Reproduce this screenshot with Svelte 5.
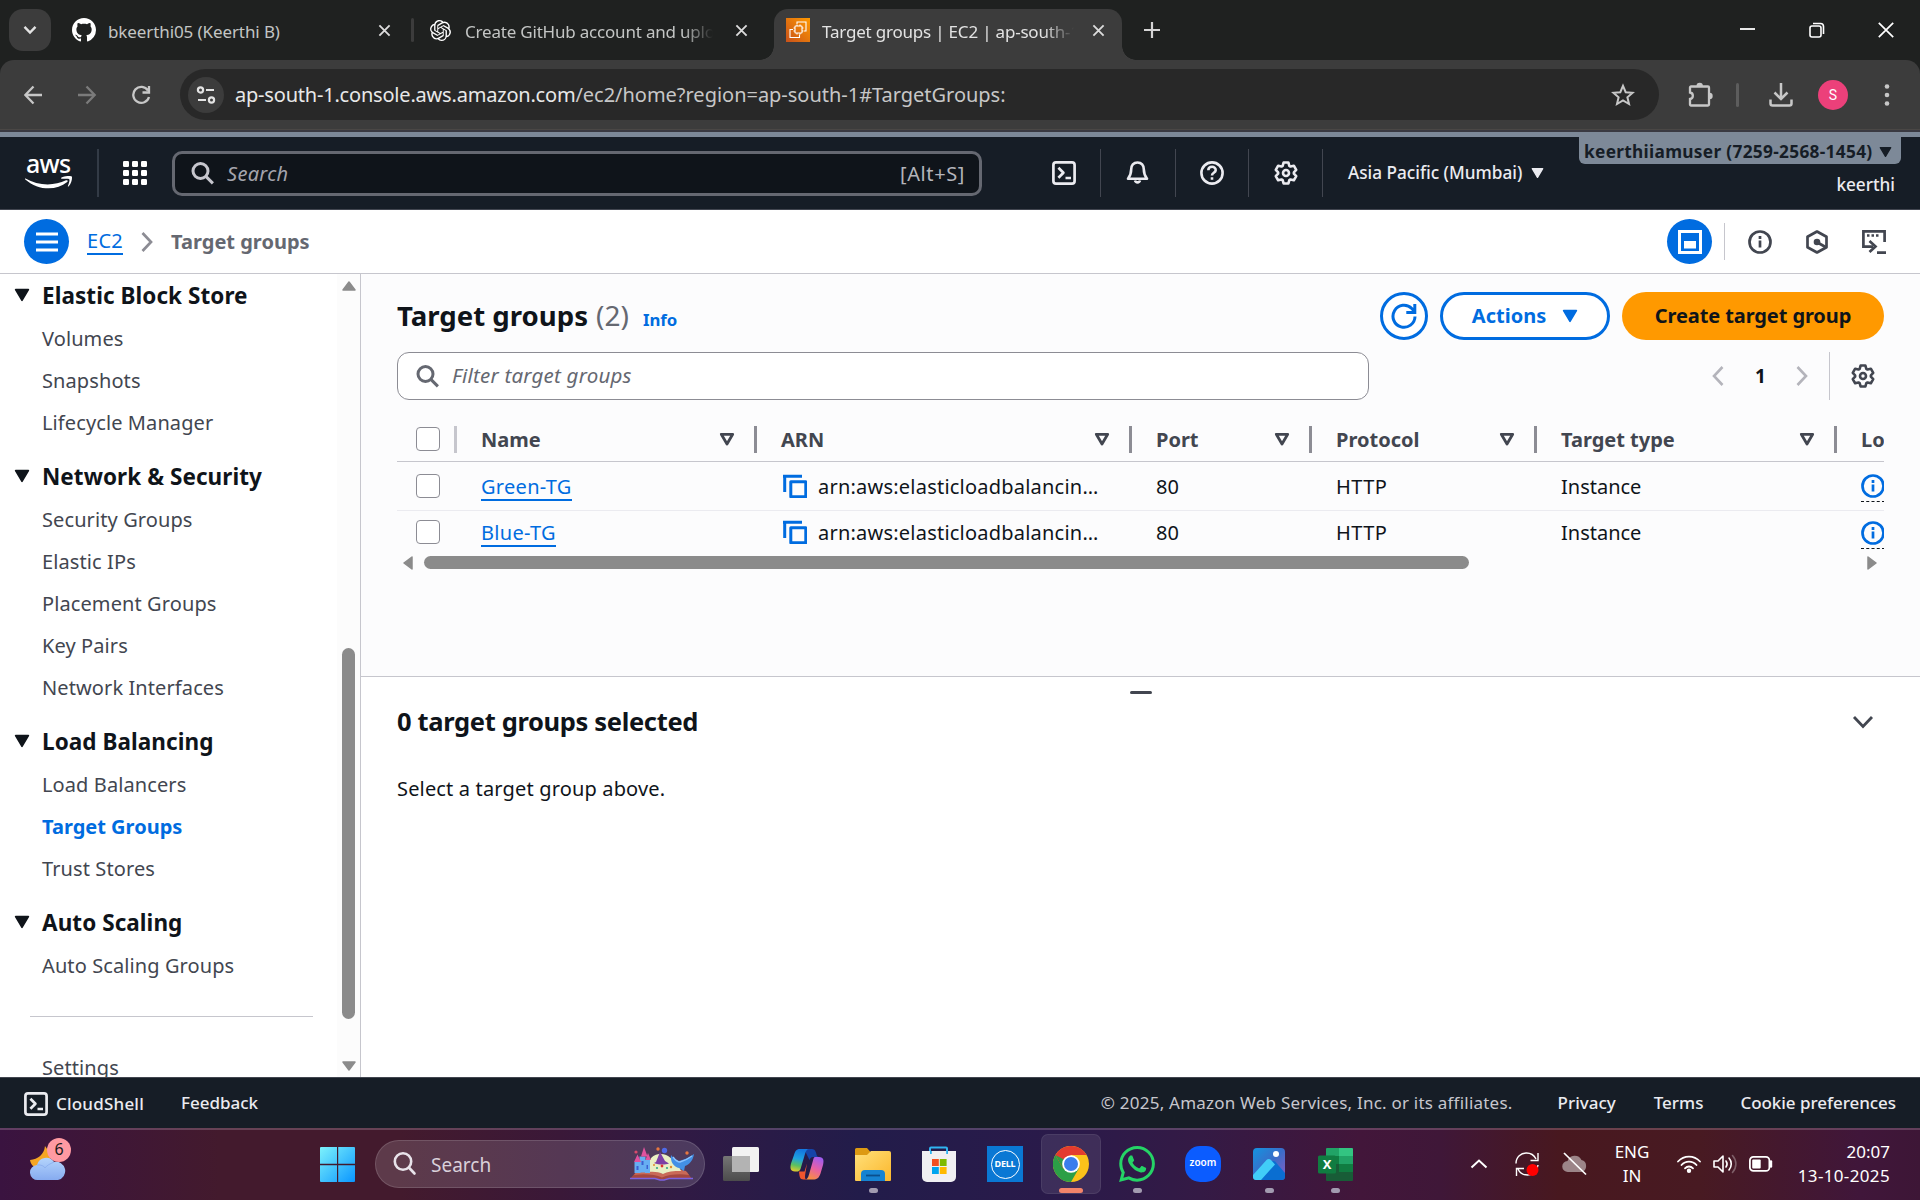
<script>
  const nav = [
    { title: 'Elastic Block Store', items: ['Volumes', 'Snapshots', 'Lifecycle Manager'] },
    { title: 'Network & Security', items: ['Security Groups', 'Elastic IPs', 'Placement Groups', 'Key Pairs', 'Network Interfaces'] },
    { title: 'Load Balancing', items: ['Load Balancers', 'Target Groups', 'Trust Stores'] },
    { title: 'Auto Scaling', items: ['Auto Scaling Groups'] }
  ];
  const current = 'Target Groups';
  const columns = ['Name', 'ARN', 'Port', 'Protocol', 'Target type'];
  const rows = [
    { name: 'Green-TG', arn: 'arn:aws:elasticloadbalancin…', port: '80', protocol: 'HTTP', type: 'Instance' },
    { name: 'Blue-TG', arn: 'arn:aws:elasticloadbalancin…', port: '80', protocol: 'HTTP', type: 'Instance' }
  ];

  // Outline of a six-toothed cog centred in a 24px box.
  function cog() {
    const pts = [];
    for (let k = 0; k < 6; k++) {
      const a = -90 + 60 * k;
      for (const [d, r] of [[-25, 7.9], [-13, 10.7], [13, 10.7], [25, 7.9]]) {
        const t = ((a + d) * Math.PI) / 180;
        pts.push(`${(12 + r * Math.cos(t)).toFixed(2)} ${(12 + r * Math.sin(t)).toFixed(2)}`);
      }
    }
    return `M${pts.join('L')}Z`;
  }
  const cogPath = cog();
</script>

{#snippet gear()}
  <svg class="i24" viewBox="0 0 24 24" fill="none" stroke="currentColor" stroke-width="2.6" stroke-linejoin="round"><path d={cogPath} /><circle cx="12" cy="12" r="3" /></svg>
{/snippet}
{#snippet shell()}
  <svg class="i24" viewBox="0 0 24 24" fill="none" stroke="currentColor" stroke-width="2.7" stroke-linejoin="round"><rect x="1.4" y="1.4" width="21.2" height="21.2" rx="2.6" /><path d="M6.400 6.800l5 5-5 5M13.500 17h5.500" /></svg>
{/snippet}
{#snippet lens()}
  <svg class="i24" viewBox="0 0 24 24" fill="none" stroke="currentColor" stroke-width="3"><circle cx="9.500" cy="10" r="7.500" /><path d="M14.900 15.400l7 7" /></svg>
{/snippet}
{#snippet caret()}
  <svg class="caret" viewBox="0 0 16 14"><path d="M1.600 1.600h12.800L8 12.400z" fill="currentColor" stroke="currentColor" stroke-width="1.600" stroke-linejoin="round" /></svg>
{/snippet}
{#snippet cross()}
  <svg class="cross" viewBox="0 0 14 14"><path d="M1.500 1.500l11 11M12.500 1.500l-11 11" stroke="currentColor" stroke-width="2" /></svg>
{/snippet}
{#snippet infoIcon()}
  <svg class="i24" viewBox="0 0 24 24" fill="none" stroke="currentColor" stroke-width="2.700"><circle cx="12" cy="12" r="10.500" /><path d="M12 10.500v7M12 6v3" /></svg>
{/snippet}

<div class="screen">
  <div class="tabs">
    <div class="tabsearch"><svg width="14" height="10" viewBox="0 0 14 10"><path d="M1.500 1.800L7 7.500l5.500-5.700" fill="none" stroke="#e3e3e3" stroke-width="2.400" /></svg></div>
    <div class="tab t1">
      <svg class="i24" viewBox="0 0 16 16" fill="#fff"><path d="M8 0C3.58 0 0 3.58 0 8c0 3.54 2.29 6.53 5.47 7.59.4.07.55-.17.55-.38 0-.19-.01-.82-.01-1.49-2.01.37-2.53-.49-2.69-.94-.09-.23-.48-.94-.82-1.13-.28-.15-.68-.52-.01-.53.63-.01 1.08.58 1.23.82.72 1.21 1.87.87 2.33.66.07-.52.28-.87.51-1.07-1.78-.2-3.64-.89-3.64-3.95 0-.87.31-1.59.82-2.15-.08-.2-.36-1.02.08-2.12 0 0 .67-.21 2.2.82.64-.18 1.32-.27 2-.27.68 0 1.36.09 2 .27 1.53-1.04 2.2-.82 2.2-.82.44 1.1.16 1.92.08 2.12.51.56.82 1.27.82 2.15 0 3.07-1.87 3.75-3.65 3.95.29.25.54.73.54 1.48 0 1.07-.01 1.93-.01 2.2 0 .21.15.46.55.38A8.013 8.013 0 0016 8c0-4.42-3.58-8-8-8z" /></svg>
      <span class="label">bkeerthi05 (Keerthi B)</span>
      {@render cross()}
    </div>
    <i class="tabline"></i>
    <div class="tab t2">
      <svg width="21" height="21" viewBox="0 0 24 24" fill="#fff"><path d="M22.2819 9.8211a5.9847 5.9847 0 0 0-.5157-4.9108 6.0462 6.0462 0 0 0-6.5098-2.9A6.0651 6.0651 0 0 0 4.9807 4.1818a5.9847 5.9847 0 0 0-3.9977 2.9 6.0462 6.0462 0 0 0 .7427 7.0966 5.98 5.98 0 0 0 .511 4.9107 6.051 6.051 0 0 0 6.5146 2.9001A5.9847 5.9847 0 0 0 13.2599 24a6.0557 6.0557 0 0 0 5.7718-4.2058 5.9894 5.9894 0 0 0 3.9977-2.9001 6.0557 6.0557 0 0 0-.7475-7.073zm-9.022 12.6081a4.4755 4.4755 0 0 1-2.8764-1.0408l.1419-.0804 4.7783-2.7582a.7948.7948 0 0 0 .3927-.6813v-6.7369l2.02 1.1686a.071.071 0 0 1 .038.052v5.5826a4.504 4.504 0 0 1-4.4945 4.4944zm-9.6607-4.1254a4.4708 4.4708 0 0 1-.5346-3.0137l.142.0852 4.783 2.7582a.7712.7712 0 0 0 .7806 0l5.8428-3.3685v2.3324a.0804.0804 0 0 1-.0332.0615L9.74 19.9502a4.4992 4.4992 0 0 1-6.1408-1.6464zM2.3408 7.8956a4.485 4.485 0 0 1 2.3655-1.9728V11.6a.7664.7664 0 0 0 .3879.6765l5.8144 3.3543-2.0201 1.1685a.0757.0757 0 0 1-.071 0l-4.8303-2.7865A4.504 4.504 0 0 1 2.3408 7.872zm16.5963 3.8558L13.1038 8.364 15.1192 7.2a.0757.0757 0 0 1 .071 0l4.8303 2.7913a4.4944 4.4944 0 0 1-.6765 8.1042v-5.6772a.79.79 0 0 0-.407-.667zm2.0107-3.0231l-.142-.0852-4.7735-2.7818a.7759.7759 0 0 0-.7854 0L9.409 9.2297V6.8974a.0662.0662 0 0 1 .0284-.0615l4.8303-2.7866a4.4992 4.4992 0 0 1 6.6802 4.66zM8.3065 12.863l-2.02-1.1638a.0804.0804 0 0 1-.038-.0567V6.0742a4.4992 4.4992 0 0 1 7.3757-3.4537l-.142.0805L8.704 5.459a.7948.7948 0 0 0-.3927.6813zm1.0976-2.3654l2.602-1.4998 2.6069 1.4998v2.9994l-2.5974 1.4997-2.6067-1.4997Z" /></svg>
      <span class="label fade">Create GitHub account and upload</span>
      {@render cross()}
    </div>
    <div class="tab t3">
      <svg class="i24" viewBox="0 0 24 24"><defs><linearGradient id="ec2" x1="0" y1="1" x2="1" y2="0"><stop offset="0" stop-color="#c8511b" /><stop offset="1" stop-color="#f90" /></linearGradient></defs><rect width="24" height="24" fill="url(#ec2)" /><g fill="none" stroke="#fff" stroke-width="1.100"><path d="M11 6V4h9v9h-2M7 11.500H4v8h9.500v-3" /><rect x="9" y="8" width="7" height="7" rx=".6" /><path d="M11 8V6.500M14 8V6.500M11 16.500V15M14 16.500V15M9 10H7.500M9 13H7.500M17.500 10H16M17.500 13H16" /></g></svg>
      <span class="label fade">Target groups | EC2 | ap-south-1</span>
      {@render cross()}
    </div>
    <svg class="plus" width="16" height="16" viewBox="0 0 16 16"><path d="M8 0v16M0 8h16" stroke="#d5d5d5" stroke-width="2.200" /></svg>
    <div class="win">
      <svg width="16" height="16" viewBox="0 0 16 16"><path d="M0 7h15" stroke="#fff" stroke-width="1.800" /></svg>
      <svg width="16" height="16" viewBox="0 0 16 16" fill="none" stroke="#fff" stroke-width="1.600"><rect x="1" y="4" width="11" height="11" rx="2" /><path d="M4 1.500h7.500a3 3 0 0 1 3 3V12" /></svg>
      <svg width="16" height="16" viewBox="0 0 16 16"><path d="M.8.8l14.400 14.400M15.200.8L.8 15.200" stroke="#fff" stroke-width="1.700" /></svg>
    </div>
  </div>

  <div class="toolback"><div class="toolbar">
    <svg class="nv" width="54" height="24" viewBox="0 0 54 24" fill="none" stroke="#c7c7c7" stroke-width="2.300"><path d="M18 12H1.500M9.500 3.500L1.300 12l8.200 8.500" /></svg>
    <svg class="nv" width="54" height="24" viewBox="0 0 54 24" fill="none" stroke="#7b7b7b" stroke-width="2.300"><path d="M0 12h16.500M8.500 3.500l8.200 8.500-8.200 8.500" /></svg>
    <svg class="nv" width="48" height="24" viewBox="0 0 48 24" fill="none" stroke="#c7c7c7" stroke-width="2.300"><path d="M16 7.500A8 8 0 1 0 17 14M17 3v6.500h-6.500" /></svg>
    <div class="omni">
      <div class="site"><svg width="20" height="20" viewBox="0 0 20 20" fill="none" stroke="#e3e3e3" stroke-width="2.200"><circle cx="4.500" cy="5" r="2.600" /><path d="M10 5h8M2 15h8" /><circle cx="15.500" cy="15" r="2.600" /></svg></div>
      <span class="url">ap-south-1.console.aws.amazon.com<em>/ec2/home?region=ap-south-1#TargetGroups:</em></span>
      <svg class="star" width="24" height="24" viewBox="0 0 24 24"><path d="M12 2.800l2.700 6.400 6.900.6-5.200 4.500 1.600 6.700-6-3.600L6 21l1.600-6.700-5.200-4.500 6.900-.6z" fill="none" stroke="#c7c7c7" stroke-width="2" stroke-linejoin="miter" /></svg>
    </div>
    <svg class="ext" width="26" height="26" viewBox="0 0 26 26"><path d="M3 4.500h17a1 1 0 0 1 1 1V22.500a1 1 0 0 1-1 1H3a1 1 0 0 1-1-1v-5.500c3.800-.6 3.800-6 0-6.500V5.500a1 1 0 0 1 1-1z" fill="none" stroke="#c7c7c7" stroke-width="2.300" /><path d="M8.500 4a3.200 3.200 0 0 1 6.400 0zM21.500 10.800a3.200 3.200 0 0 1 0 6.400z" fill="#c7c7c7" /></svg>
    <i class="toolline"></i>
    <svg width="24" height="24" viewBox="0 0 24 24" fill="none" stroke="#c7c7c7" stroke-width="2.500"><path d="M12 0v15M5.500 9.500l6.500 6.500 6.500-6.500M1.500 16.500v4a2 2 0 0 0 2 2h17a2 2 0 0 0 2-2v-4" /></svg>
    <div class="me">S</div>
    <svg class="dots" width="6" height="22" viewBox="0 0 6 22" fill="#c7c7c7"><circle cx="3" cy="2.500" r="2.300" /><circle cx="3" cy="11" r="2.300" /><circle cx="3" cy="19.500" r="2.300" /></svg>
  </div></div>

  <header>
    <div class="aws"><b>aws</b><svg width="48" height="15" viewBox="0 0 48 15" fill="#fff"><path d="M.5 2.500C13 9.800 29 10.200 41 4.300c1.400-.6 2.300.8 1.200 1.700C31 15.200 13 14.500.3 3.400c-.6-.5-.4-1.200.2-.9z" /><path d="M36.500 1.500c3-1.700 9.600-2 10.300-.9.700 1.200-.3 7-3 9.700-.7.600-1.200.3-.9-.4.900-2 2-5.600 1.500-6.500-.7-.9-4.500-.6-7.200-.6-1.100 0-1.500-.7-.7-1.300z" /></svg></div>
    <svg class="apps" width="24" height="24" viewBox="0 0 24 24" fill="#fff"><rect width="6" height="6" rx="1.200" /><rect x="9" width="6" height="6" rx="1.200" /><rect x="18" width="6" height="6" rx="1.200" /><rect y="9" width="6" height="6" rx="1.200" /><rect x="9" y="9" width="6" height="6" rx="1.200" /><rect x="18" y="9" width="6" height="6" rx="1.200" /><rect y="18" width="6" height="6" rx="1.200" /><rect x="9" y="18" width="6" height="6" rx="1.200" /><rect x="18" y="18" width="6" height="6" rx="1.200" /></svg>
    <div class="awssearch">{@render lens()}<span class="ph">Search</span><span class="key">[Alt+S]</span></div>
    <div class="hi h1">{@render shell()}</div>
    <div class="hi h2"><svg class="i24" viewBox="0 0 24 24" fill="none" stroke="currentColor" stroke-width="2.600" stroke-linejoin="round"><path d="M11.500 1.500c-4 0-6.300 3-6.300 6.800 0 4.500-1 6.500-3.200 9.400h19c-2.200-2.900-3.200-4.900-3.200-9.400 0-3.800-2.300-6.800-6.300-6.800z" /><path d="M9 19.500a2.600 2.600 0 0 0 5 0" /></svg></div>
    <div class="hi h3"><svg class="i24" viewBox="0 0 24 24" fill="none" stroke="currentColor" stroke-width="2.600"><circle cx="12" cy="12" r="10.600" /><path d="M8.300 9.200c.2-4.600 7.500-4.400 7.400-.1-.1 2.800-3.700 2.600-3.700 5.400M12 16.200v2.600" /></svg></div>
    <div class="hi h4">{@render gear()}</div>
    <div class="region"><span>Asia Pacific (Mumbai)</span>{@render caret()}</div>
    <div class="acct">
      <div class="who"><span>keerthiiamuser (7259-2568-1454)</span>{@render caret()}</div>
      <div class="alias">keerthi</div>
    </div>
  </header>

  <div class="crumbs">
    <div class="round"><svg width="22" height="20" viewBox="0 0 22 20"><path d="M0 2h22M0 10h22M0 18h22" stroke="#fff" stroke-width="3" /></svg></div>
    <a class="lnk ec2" href="#ec2">EC2</a>
    <svg class="chev" width="12" height="20" viewBox="0 0 12 20"><path d="M1.500 1l8.500 9-8.500 9" fill="none" stroke="#8c8c94" stroke-width="2.700" /></svg>
    <b class="here">Target groups</b>
    <div class="round split"><svg class="i24" viewBox="0 0 24 24" fill="none"><rect x="1.500" y="1.500" width="21" height="21" stroke="#fff" stroke-width="3" /><rect x="6" y="11" width="12" height="7.500" fill="#fff" /></svg></div>
    <i class="cline"></i>
    <div class="tool a">{@render infoIcon()}</div>
    <div class="tool b"><svg class="i24" viewBox="0 0 24 24" fill="none" stroke="currentColor" stroke-width="2.700"><path d="M12 1.500l9.500 5.300v10.400L12 22.500l-9.500-5.300V6.800z" stroke-linejoin="round" /><circle cx="12" cy="12" r="3.300" fill="currentColor" stroke="none" /><path d="M12.500 12.500l8 4.500" /></svg></div>
    <div class="tool c"><svg class="i24" viewBox="0 0 24 24" fill="none" stroke="currentColor" stroke-width="2.700"><path d="M22.600 12V1.400H1.400v15.200H11" /><path d="M7.500 11l6 5.500L7.500 22M15 22.600h9" /><path d="M5 5.500h2.500M9.500 5.500H12M14 5.500h2.500" stroke-width="2.400" /></svg></div>
  </div>

  <div class="content">
    <aside>
      <nav>
        {#each nav as group}
          <section>
            <h3>{@render caret()}{group.title}</h3>
            {#each group.items as item}<a href="#nav" class:on={item === current}>{item}</a>{/each}
          </section>
        {/each}
        <hr />
        <a class="set" href="#settings">Settings</a>
      </nav>
      <div class="vbar">
        <svg width="14" height="10" viewBox="0 0 14 10"><path d="M7 1l6 8H1z" fill="#8b8b8b" stroke="#8b8b8b" stroke-width="1.500" stroke-linejoin="round" /></svg>
        <i></i>
        <svg width="14" height="10" viewBox="0 0 14 10"><path d="M7 9l6-8H1z" fill="#8b8b8b" stroke="#8b8b8b" stroke-width="1.500" stroke-linejoin="round" /></svg>
      </div>
    </aside>
    <main>
      <div class="list">
        <div class="head">
          <h1>Target groups</h1><span class="count">(2)</span><b class="info">Info</b>
          <button class="refresh" aria-label="Refresh"><svg width="26" height="26" viewBox="0 0 26 26" fill="none" stroke="currentColor" stroke-width="3"><path d="M24 13.500A11 11 0 1 1 20.800 5.500L23.500 8.500M23.800 1v8.500h-8.500" /></svg></button>
          <button class="actions"><span>Actions</span>{@render caret()}</button>
          <button class="create">Create target group</button>
        </div>
        <div class="filters">
          <div class="filter">{@render lens()}<span>Filter target groups</span></div>
          <svg class="pg" width="12" height="20" viewBox="0 0 12 20"><path d="M10.500 1L2 10l8.500 9" fill="none" stroke="#b4b4bb" stroke-width="2.600" /></svg>
          <b class="one">1</b>
          <svg class="pg" width="12" height="20" viewBox="0 0 12 20"><path d="M1.500 1L10 10l-8.500 9" fill="none" stroke="#b4b4bb" stroke-width="2.600" /></svg>
          <div class="prefs">{@render gear()}</div>
        </div>
        <div class="table">
          <div class="row th">
            <div class="sel"><i class="box"></i></div>
            {#each columns as c}<div class="cell"><span>{c}</span><svg width="16" height="14" viewBox="0 0 16 14"><path d="M2.300 2.300h11.400L8 12z" fill="none" stroke="#424650" stroke-width="2.800" stroke-linejoin="round" /></svg></div>{/each}
            <div class="cell last"><span>Load balancer</span></div>
          </div>
          {#each rows as r}
            <div class="row">
              <div class="sel"><i class="box"></i></div>
              <div class="cell"><a class="lnk" href="#tg">{r.name}</a></div>
              <div class="cell arn"><svg class="i24" viewBox="0 0 24 24" fill="none" stroke="#006ce0" stroke-width="3"><path d="M0 2.200h19M1.700 1v17" /><rect x="7.800" y="7.800" width="15" height="15" stroke-linejoin="round" /></svg><span>{r.arn}</span></div>
              <div class="cell">{r.port}</div>
              <div class="cell http">{r.protocol}</div>
              <div class="cell">{r.type}</div>
              <div class="cell last"><div class="tip">{@render infoIcon()}</div></div>
            </div>
          {/each}
        </div>
        <div class="hbar">
          <svg width="10" height="14" viewBox="0 0 10 14"><path d="M1 7l8-6v12z" fill="#8b8b8b" stroke="#8b8b8b" stroke-width="1.500" stroke-linejoin="round" /></svg>
          <i></i>
          <svg width="10" height="14" viewBox="0 0 10 14"><path d="M9 7L1 1v12z" fill="#8b8b8b" stroke="#8b8b8b" stroke-width="1.500" stroke-linejoin="round" /></svg>
        </div>
      </div>
      <div class="panel">
        <i class="grip"></i>
        <div class="ptitle"><h2>0 target groups selected</h2><svg width="22" height="14" viewBox="0 0 22 14"><path d="M2 2l9 9.500L20 2" fill="none" stroke="#424650" stroke-width="2.800" /></svg></div>
        <p>Select a target group above.</p>
      </div>
    </main>
  </div>

  <footer>
    <div class="cs">{@render shell()}<span>CloudShell</span></div>
    <span class="fb">Feedback</span>
    <span class="copy">© 2025, Amazon Web Services, Inc. or its affiliates.</span>
    <span class="f1">Privacy</span><span class="f2">Terms</span><span class="f3">Cookie preferences</span>
  </footer>

  <div class="taskbar">
    <div class="weather">
      <svg width="36" height="36" viewBox="0 0 36 36"><defs><linearGradient id="cl" x1="0" y1="0" x2="0" y2="1"><stop offset="0" stop-color="#b4d4fc" /><stop offset="1" stop-color="#86abf0" /></linearGradient></defs><path d="M15 0C14 9 8 13 0 14c1 7 8 10 14 8 8-3 9-12 1-22z" fill="#f5a623" /><path d="M8 34a7.500 7.500 0 0 1-1-15A9.500 9.500 0 0 1 24 16a9 9 0 0 1 4 18z" fill="url(#cl)" /><path d="M7 19c4-.5 7 1 8 3 2-3 5-4 9-6" fill="none" stroke="#8fb2f0" stroke-width="1" /></svg>
      <span class="badge">6</span>
    </div>
    <svg class="start" width="35" height="35" viewBox="0 0 35 35"><defs><linearGradient id="wn" x1="0" y1="0" x2="1" y2="1"><stop offset="0" stop-color="#7df2fb" /><stop offset="1" stop-color="#0a96ff" /></linearGradient></defs><path d="M1 0h16v16.800H0V1a1 1 0 0 1 1-1zM18.200 0H34a1 1 0 0 1 1 1v15.800H18.200zM0 18.200h17V35H1a1 1 0 0 1-1-1zM18.200 18.200H35V34a1 1 0 0 1-1 1H18.200z" fill="url(#wn)" /></svg>
    <div class="wsearch">
      <svg width="24" height="24" viewBox="0 0 24 24" fill="none" stroke="#e8e3ea" stroke-width="2.600" stroke-linecap="round"><circle cx="10" cy="9.500" r="8.200" /><path d="M15.800 15.500l5.700 6" /></svg>
      <span>Search</span>
      <svg class="story" width="68" height="34" viewBox="0 0 68 34">
        <path d="M8 25l23 3 6 0 22-3 5 7-26 0-4 1-4-1H2z" fill="#a4473f" />
        <path d="M2 31.500h25l5 1.500h4l5-1.500h24" stroke="#7d63e0" stroke-width="1.500" fill="none" />
        <path d="M9 24c8-2 18-2 25 2.500 7-4.500 17-4.500 24-2.500l3 4c-10-1.500-20-.5-27 2.500-7-3-17-4-28-2.500z" fill="#c96a58" />
        <path d="M21 25c-2-9 1-17 10-18 9-1 14 6 20 12l2 5c-7 0-14 .5-18 3-4-2-9-2.500-14-2z" fill="#e9efc4" />
        <path d="M6.500 15h6v11h-6zM11.500 9.500h6v16h-6zM17 13h5v13h-5z" fill="#67aef2" />
        <path d="M9.500 7.500l3.500 7.500H6zM16 0l3.500 9.500h-6.500zM20 6l3 7h-5.500z" fill="#e0529e" />
        <path d="M8.500 19h2v4h-2zM13.500 14h2v4h-2zM18.500 18h1.500v4h-1.500z" fill="#3c5fd0" />
        <path d="M28 15l4-10 5 9 4 2.500c-4 1.500-10 1.500-15-.5z" fill="#7c3fa6" />
        <path d="M43 8c2 3 5 5 8 6 4-1 9-3 15-7-1 6-4 10-9 12l-1 5-5-3c-5-1-9-6-8-13z" fill="#4390e6" />
        <path d="M45 10c3 4 5 5 7 5 4-1 8-3 12-6" fill="none" stroke="#8cc4ff" stroke-width="1.300" />
        <circle cx="36.500" cy="3.500" r="2.700" fill="#4f6ae8" /><circle cx="30" cy="2" r="1.700" fill="#e8773f" /><circle cx="59" cy="6" r="1.700" fill="#e8773f" /><circle cx="8" cy="5" r="1.600" fill="#d94a6b" />
        <circle cx="34" cy="19" r="1.400" fill="#d33" /><circle cx="39" cy="21" r="1.100" fill="#3a8" /><circle cx="43" cy="20" r="1.200" fill="#e58a2a" /><circle cx="29" cy="21" r="1.100" fill="#3a8" /><circle cx="26" cy="18" r="1" fill="#e58a2a" />
      </svg>
    </div>
    <div class="apps2">
      <div class="app"><svg width="36" height="36" viewBox="0 0 36 36"><defs><linearGradient id="tv" x1="0" y1="0" x2="0" y2="1"><stop offset="0" stop-color="#757575" /><stop offset="1" stop-color="#4c4c4c" /></linearGradient></defs><rect y="10" width="27" height="25" rx="1.500" fill="url(#tv)" /><rect x="9" y="1" width="27" height="25" rx="1.500" fill="#f2f2f2" /><path d="M9 10h18v16H10.500A1.500 1.500 0 0 1 9 24.500z" fill="#b3b3b3" /></svg></div>
      <div class="app"><svg width="36" height="36" viewBox="0 0 36 36"><defs><linearGradient id="ca" x1=".3" y1="0" x2=".1" y2="1"><stop offset="0" stop-color="#1478e0" /><stop offset=".4" stop-color="#1fa3e0" /><stop offset=".7" stop-color="#5cc060" /><stop offset="1" stop-color="#f0cc28" /></linearGradient><linearGradient id="cb" x1=".7" y1="0" x2=".3" y2="1"><stop offset="0" stop-color="#a05cf0" /><stop offset=".5" stop-color="#e860a4" /><stop offset="1" stop-color="#f9903e" /></linearGradient></defs><path d="M15 3h8c3 0 4 3 4.500 5.500.3 1.500 1 2.500 2.500 2.500h-6c-2 0-3 1.500-3.500 3z" fill="#1544a8" /><path d="M26 11h4c5 0 5 4 4 8l-2.500 8.500C30 32 28 33.500 24 33.500h-8c2 0 3-1.500 4-5l4-14c.5-2 1-3.500 2-3.500z" fill="url(#cb)" /><path d="M10 25.500h5.500l2.500-8-1.500 9c-.5 3-1 7 1 7h-3c-4 0-4-3.500-4.500-8z" fill="#f0552e" /><path d="M11 3h9c-2 0-3 1.500-4 5l-4.500 15c-.8 2-2 2.500-4 2.500H6c-5 0-5-4-4-8L5 9c1.200-4.500 3-6 6-6z" fill="url(#ca)" /></svg></div>
      <div class="app run"><svg width="36" height="36" viewBox="0 0 36 36"><defs><linearGradient id="fo" x1="0" y1="0" x2="1" y2="1"><stop offset="0" stop-color="#ffe07a" /><stop offset="1" stop-color="#fbb72c" /></linearGradient></defs><path d="M0 3.500A1.500 1.500 0 0 1 1.500 2H12l3.500 4H34a2 2 0 0 1 2 2v5H0z" fill="#dd9a12" /><path d="M0 9h12l4-4h18a2 2 0 0 1 2 2v27a1 1 0 0 1-1 1H1a1 1 0 0 1-1-1z" fill="url(#fo)" /><path d="M6 35V28a4 4 0 0 1 4-4h16a4 4 0 0 1 4 4v7z" fill="#1683d2" /><path d="M11 29.500h14" stroke="#0b4f8c" stroke-width="1.800" /></svg></div>
      <div class="app"><svg width="36" height="36" viewBox="0 0 36 36"><path d="M9 8V2.500A1 1 0 0 1 10 1.500h15a1 1 0 0 1 1 1V8" fill="none" stroke="#30b4f0" stroke-width="2" /><path d="M1 5h34v26a5 5 0 0 1-5 5H6a5 5 0 0 1-5-5z" fill="#f0eff2" /><path d="M9 8V5h1.800v3zM25.200 8V5H27v3z" fill="#30b4f0" /><rect x="11" y="13" width="6.800" height="7" fill="#f25022" /><rect x="18.800" y="13" width="6.800" height="7" fill="#7fba00" /><rect x="11" y="21" width="6.800" height="7" fill="#00a4ef" /><rect x="18.800" y="21" width="6.800" height="7" fill="#ffb900" /></svg></div>
      <div class="app"><div class="dell"><span>DELL</span></div></div>
      <div class="app active"><svg width="36" height="36" viewBox="0 0 36 36"><circle cx="18" cy="18" r="18" fill="#fbc21a" /><path d="M18 18L2.400 9A18 18 0 0 1 33.600 9H18z" fill="#e33b2e" /><path d="M18 18l7.800 4.500L18 36A18 18 0 0 1 2.400 9l7.800 13.500z" fill="#2c9f47" /><path d="M2.400 9L10 22.500 18 9z" fill="#e33b2e" /><path d="M2.400 9l7.800 13.600L12 14z" fill="#2c9f47" /><circle cx="18" cy="18" r="8.800" fill="#fff" /><circle cx="18" cy="18" r="7" fill="#3b7ded" /></svg></div>
      <div class="app run"><svg width="36" height="36" viewBox="0 0 24 24" fill="#25d366"><path d="M17.472 14.382c-.297-.149-1.758-.867-2.030-.967-.273-.099-.471-.148-.67.150-.197.297-.767.966-.940 1.164-.173.199-.347.223-.644.075-.297-.150-1.255-.463-2.390-1.475-.883-.788-1.480-1.761-1.653-2.059-.173-.297-.018-.458.130-.606.134-.133.298-.347.446-.520.149-.174.198-.298.298-.497.099-.198.050-.371-.025-.520-.075-.149-.669-1.612-.916-2.207-.242-.579-.487-.500-.669-.510-.173-.008-.371-.010-.570-.010-.198 0-.520.074-.792.372-.272.297-1.040 1.016-1.040 2.479 0 1.462 1.065 2.875 1.213 3.074.149.198 2.096 3.200 5.077 4.487.709.306 1.262.489 1.694.625.712.227 1.360.195 1.871.118.571-.085 1.758-.719 2.006-1.413.248-.694.248-1.289.173-1.413-.074-.124-.272-.198-.570-.347m-5.421 7.403h-.004a9.870 9.870 0 0 1-5.031-1.378l-.361-.214-3.741.982.998-3.648-.235-.374a9.860 9.860 0 0 1-1.510-5.260c.001-5.450 4.436-9.884 9.888-9.884 2.640 0 5.122 1.030 6.988 2.898a9.825 9.825 0 0 1 2.893 6.994c-.003 5.450-4.437 9.884-9.885 9.884m8.413-18.297A11.815 11.815 0 0 0 12.050 0C5.495 0 .160 5.335.157 11.892c0 2.096.547 4.142 1.588 5.945L.057 24l6.305-1.654a11.882 11.882 0 0 0 5.683 1.448h.005c6.554 0 11.890-5.335 11.893-11.893a11.821 11.821 0 0 0-3.480-8.413z" /></svg></div>
      <div class="app"><div class="zoom">zoom</div></div>
      <div class="app run"><svg width="32" height="32" viewBox="0 0 32 32"><defs><linearGradient id="ph" x1="0" y1="0" x2="1" y2="1"><stop offset="0" stop-color="#1494e0" /><stop offset=".5" stop-color="#3a6cc8" /><stop offset="1" stop-color="#8a5cc0" /></linearGradient></defs><rect width="32" height="32" rx="4" fill="url(#ph)" /><path d="M3 32L18 14a3 3 0 0 1 4.500 0L32 25v4a3 3 0 0 1-3 3z" fill="#0a6ed1" /><path d="M0 27l13.500-15a3 3 0 0 1 4.500 0l4 4.500L8 32H3a3 3 0 0 1-3-3z" fill="#41cdf8" /><circle cx="23" cy="6" r="3" fill="#fff" /></svg></div>
      <div class="app run"><svg width="36" height="36" viewBox="0 0 36 36"><path d="M9 3a1 1 0 0 1 1-1h12v8H9z" fill="#21a366" /><path d="M22 2h13a1 1 0 0 1 1 1v7H22z" fill="#33c481" /><path d="M9 10h13v8H9z" fill="#107c41" /><path d="M22 10h14v8H22z" fill="#21a366" /><path d="M9 18h13v8H9z" fill="#185c37" /><path d="M22 18h14v8H22z" fill="#107c41" /><path d="M9 26h27v8a1 1 0 0 1-1 1H10a1 1 0 0 1-1-1z" fill="#185c37" /><rect x="1" y="9.500" width="18" height="18" rx="1.500" fill="#107c41" /></svg><span class="xl">X</span></div>
    </div>
    <svg class="up" width="18" height="10" viewBox="0 0 18 10"><path d="M1.500 8.500L9 1.500l7.500 7" fill="none" stroke="#fff" stroke-width="2" /></svg>
    <svg class="sync" width="26" height="26" viewBox="0 0 26 26" fill="none" stroke="#fff" stroke-width="1.400"><path d="M2 12.500C2 6 7 2 12.500 2c4 0 7.500 2 9.500 6M24 2v7.500h-7.500M24 14c-.500 6-5 10-10.500 10-4.500 0-8-2.500-9.500-6M2.500 25v-7.500H10" /><circle cx="18.500" cy="19" r="6" fill="#f00" stroke="none" /></svg>
    <svg class="cloud" width="26" height="24" viewBox="0 0 26 24"><path d="M6 20a5.500 5.500 0 0 1-.500-11A7.500 7.500 0 0 1 19.500 8 6.200 6.200 0 0 1 19.500 20z" fill="#9c8588" /><path d="M2 1l22 21.500" stroke="#fff" stroke-width="1.700" /></svg>
    <div class="lang"><span>ENG</span><span>IN</span></div>
    <svg class="wifi" width="24" height="18" viewBox="0 0 24 18" fill="none" stroke="#fff" stroke-width="1.800" stroke-linecap="round"><path d="M1 6.500c6-6.500 16-6.500 22 0M4.500 10c4-4.500 11-4.500 15 0M8 13.300c2.300-2.400 5.700-2.400 8 0" /><circle cx="12" cy="15.800" r="1.300" fill="#fff" /></svg>
    <svg class="vol" width="24" height="20" viewBox="0 0 24 20" fill="none" stroke="#fff" stroke-width="1.600" stroke-linecap="round" stroke-linejoin="round"><path d="M1 7h4l5-5v16l-5-5H1z" /><path d="M13 7c1.300 1.800 1.300 4.200 0 6M16 4c3 3.500 3 8.500 0 12" /><path d="M19.500 1.500c4.500 5 4.500 12 0 17" opacity=".3" /></svg>
    <svg class="bat" width="24" height="16" viewBox="0 0 24 16"><rect x=".9" y=".9" width="19.500" height="14" rx="3.500" fill="none" stroke="#fff" stroke-width="1.800" /><rect x="3.200" y="3.400" width="8.500" height="9" rx="1" fill="#fff" /><path d="M22 5.500v5" stroke="#fff" stroke-width="2.400" stroke-linecap="round" /></svg>
    <div class="clock"><span>20:07</span><span class="date">13-10-2025</span></div>
  </div>
</div>

<style>
  :global(body) { margin: 0; overflow: hidden; }
  .screen { width: 1920px; height: 1200px; display: flex; flex-direction: column; font-family: 'Noto Sans', sans-serif; overflow: hidden; color: #0f141a; }
  .screen * { box-sizing: border-box; }
  svg { display: block; flex: none; }
  a { text-decoration: none; color: inherit; }
  h1, h2, h3, p { margin: 0; }
  .i24 { width: 24px; height: 24px; }
  span, b, h1, h2, a { white-space: nowrap; }

  .tabs { height: 60px; flex: none; display: flex; align-items: center; background: #1f2120; padding-left: 9px; color: #c3c5c4; font-size: 17px; }
  .tabsearch { width: 42px; height: 42px; border-radius: 14px; background: #3c3c3c; display: grid; place-items: center; flex: none; }
  .tab { display: flex; align-items: center; height: 51px; }
  .label { flex: 1; overflow: hidden; padding-top: 3px; letter-spacing: -.2px; }
  .cross { width: 13px; height: 13px; color: #dcdcdc; }
  .t1 { width: 340px; padding-left: 21px; margin-right: 20px; }
  .t1 .label { margin-left: 12px; letter-spacing: -.1px; }
  .tabline { width: 3px; height: 24px; border-radius: 2px; background: #3c3c3c; flex: none; }
  .t2 { width: 334px; padding-left: 16px; }
  .t2 .label { margin: 0 22px 0 14px; }
  .t3 { position: relative; width: 348px; margin-left: 26px; align-self: flex-end; background: #3c3c3c; border-radius: 14px 14px 0 0; padding: 0 17px 9px 12px; color: #e3e3e3; }
  .t3::before, .t3::after { content: ''; position: absolute; bottom: 0; width: 14px; height: 14px; }
  .t3::before { left: -14px; background: radial-gradient(circle at 0 0, transparent 13.5px, #3c3c3c 14px); }
  .t3::after { right: -14px; background: radial-gradient(circle at 100% 0, transparent 13.5px, #3c3c3c 14px); }
  .t3 .label { margin: 0 18px 0 12px; }
  .fade { -webkit-mask-image: linear-gradient(to right, #000 88%, transparent); mask-image: linear-gradient(to right, #000 88%, transparent); }
  .plus { margin-left: 22px; }
  .win { margin-left: auto; display: flex; gap: 53px; padding-right: 26px; }

  .toolback { background: #1f2120; height: 69px; flex: none; }
  .toolbar { height: 69px; background: #3c3c3c; border-radius: 14px 14px 0 0; display: flex; align-items: center; padding: 0 30px 0 24px; }
  .omni { width: 1479px; height: 51px; border-radius: 26px; background: #282828; display: flex; align-items: center; padding: 0 24px 0 8px; flex: none; }
  .site { width: 36px; height: 36px; border-radius: 50%; background: #3c3c3c; display: grid; place-items: center; }
  .url { margin-left: 11px; font-size: 20px; color: #e8e8e8; flex: 1; letter-spacing: -.2px; }
  .url em { font-style: normal; color: #c7c7c7; letter-spacing: -.02px; }
  .ext { margin-left: 29px; }
  .toolline { width: 3px; height: 24px; background: #5d5d5d; margin: 0 30px 0 22px; border-radius: 2px; }
  .me { width: 30px; height: 30px; border-radius: 50%; background: #ec407a; color: #fff; font: 14px/30px Roboto, sans-serif; text-align: center; margin-left: 25px; }
  .dots { margin-left: auto; }

  header { height: 81px; flex: none; background: #161d26; border-top: 8px solid #7d8998; border-bottom: 1px solid #424650; display: flex; align-items: center; color: #ebebf0; position: relative; padding-left: 25px; }
  header::before { content: ''; position: absolute; left: 0; right: 0; top: -8px; height: 3px; background: linear-gradient(#4a4745 50%, #3a3a42 50%); }
  .aws { width: 74px; height: 48px; border-right: 2px solid #333b46; padding-top: 1px; flex: none; }
  .aws b { display: block; font-weight: 500; font-size: 25px; line-height: 26px; color: #fff; margin-left: 1px; letter-spacing: -.7px; }
  .apps { margin-left: 24px; }
  .awssearch { width: 810px; height: 45px; margin-left: 25px; border: 3px solid #656871; border-radius: 10px; background: #0f141a; display: flex; align-items: center; padding: 0 14px 0 16px; color: #c6c6cd; flex: none; margin-right: 46px; }
  .awssearch span { line-height: 27px; }
  .ph { font-style: italic; color: #a4a4ad; font-size: 20px; margin-left: 12px; letter-spacing: .3px; }
  .key { margin-left: auto; color: #b4b4bb; font-size: 20px; letter-spacing: .6px; }
  .hi { height: 48px; display: flex; align-items: center; justify-content: center; border-right: 1px solid #424650; flex: none; }
  .h1 { width: 73px; } .h2 { width: 75px; } .h3 { width: 73px; } .h4 { width: 74px; }
  .region { display: flex; align-items: center; margin-left: 25px; font-size: 17.2px; font-weight: 500; letter-spacing: 0; }
  .caret { width: 16px; height: 14px; }
  header .caret { width: 13px; height: 12px; }
  .region .caret { margin-left: 9px; }
  .region span { margin-top: -1px; }
  .acct { margin-left: auto; margin-right: 19px; align-self: flex-start; text-align: right; position: relative; top: -1px; }
  .who { width: 322px; height: 28px; background: #7d8998; color: #161d26; border-radius: 0 0 6px 6px; display: flex; align-items: center; font-weight: 700; font-size: 17.3px; padding: 3px 0 0 5px; letter-spacing: .3px; }
  .who .caret { margin-left: 7px; }
  .alias { font-size: 17.200px; font-weight: 500; line-height: 24px; padding: 9px 6px 0 0; }

  .crumbs { height: 64px; flex: none; background: #fff; border-bottom: 1px solid #c6c6cd; display: flex; align-items: center; padding-left: 24px; }
  .round { width: 45px; height: 45px; border-radius: 50%; background: #006ce0; display: grid; place-items: center; flex: none; }
  .lnk { color: #006ce0; border-bottom: 2px solid #006ce0; }
  .crumbs .ec2 { margin-left: 18px; font-size: 20px; line-height: 25px; letter-spacing: .3px; }
  .chev { margin: 0 18px 0 18px; }
  .here { color: #656871; font-size: 20px; }
  .split { margin-left: auto; }
  .cline { width: 1px; height: 37px; background: #c6c6cd; margin-left: 12px; }
  .tool { color: #424650; } .a { margin-left: 23px; } .b { margin-left: 33px; } .c { margin: 0 34px 0 33px; }

  .content { flex: 1; display: flex; min-height: 0; }
  aside { width: 361px; flex: none; border-right: 1px solid #c6c6cd; background: #fff; display: flex; overflow: hidden; }
  nav { width: 337px; flex: none; padding-top: 3px; font-size: 20px; color: #424650; letter-spacing: .1px; }
  nav section { margin-bottom: 14px; }
  nav h3 { height: 36px; margin-bottom: 5px; display: flex; align-items: center; font-size: 22.500px; letter-spacing: .06px; color: #0f141a; padding-left: 14px; white-space: nowrap; }
  nav h3 .caret { margin-right: 12px; }
  nav a { display: block; height: 42px; line-height: 42px; padding-left: 42px; }
  nav .on { color: #006ce0; font-weight: 700; letter-spacing: 0; }
  hr { width: 283px; border: 0; height: 1px; background: #c6c6cd; margin: 29px 0 30px 30px; }
  .vbar { width: 23px; background: #fcfcfc; display: flex; flex-direction: column; align-items: center; padding: 7px 0 6px; }
  .vbar i { width: 13px; height: 371px; border-radius: 7px; background: #8b8b8b; margin: 357px 0 42px; flex: none; }

  main { flex: 1; display: flex; flex-direction: column; min-width: 0; background: #fff; }
  .list { height: 402px; flex: none; background: #fcfcfd; padding: 18px 36px 0; }
  .head { height: 48px; display: flex; align-items: center; }
  h1 { font-size: 27.600px; margin-top: -3px; }
  .count { font-size: 28px; color: #656871; margin: -3px 0 0 8px; }
  .info { color: #006ce0; font-size: 16.800px; margin: 6px 0 0 14px; }
  button { font-family: inherit; height: 48px; border-radius: 24px; font-weight: 700; font-size: 20px; padding: 0; }
  .refresh { width: 48px; margin-left: auto; display: grid; place-items: center; }
  .refresh, .actions { background: #fff; border: 3px solid #006ce0; color: #006ce0; }
  .actions { width: 170px; margin: 0 12px; display: flex; align-items: center; justify-content: center; gap: 16px; }
  .actions span { margin-top: -2px; }
  .create { width: 262px; border: 0; background: #f90; color: #0f141a; padding-bottom: 2px; letter-spacing: -.1px; }
  .filters { margin-top: 12px; height: 48px; display: flex; align-items: center; }
  .filter { width: 972px; height: 48px; border: 1px solid #8c8c94; border-radius: 12px; background: #fff; display: flex; align-items: center; padding-left: 18px; color: #656871; font-style: italic; font-size: 20.500px; }
  .filter span { margin: -2px 0 0 12px; letter-spacing: .22px; }
  .pg { margin-left: 343px; }
  .one { font-size: 19px; width: 13px; margin: -1px 0 0 30px; text-align: center; }
  .one + .pg { margin-left: 29px; }
  .prefs { margin-left: auto; height: 48px; border-left: 1px solid #c6c6cd; padding: 12px 9px 0 21px; color: #424650; }
  .table { margin-top: 16px; width: 1487px; overflow: hidden; font-size: 20px; }
  .row { display: grid; grid-template-columns: 60px 300px 375px 180px 225px 300px 47px; align-items: center; }
  .row + .row { height: 49px; border-bottom: 1px solid #ebebf0; }
  .row + .row + .row { height: 42px; border-bottom: 0; }
  .row.th { height: 46px; border-bottom: 1px solid #c6c6cd; font-weight: 700; color: #424650; padding-top: 1px; }
  .sel { padding-left: 19px; }
  .box { display: block; width: 24px; height: 24px; border: 1.500px solid #8c8c94; border-radius: 4px; background: #fff; }
  .cell { padding-left: 24px; display: flex; align-items: center; min-width: 0; }
  .th > div { height: 27px; display: flex; align-items: center; border-right: 3px solid #8c8c94; }
  .th > .sel { border-color: #c6c6cd; }
  .th > .last { border: 0; }
  .th svg { margin: 0 19px 0 auto; }
  .row .lnk { line-height: 25px; margin-top: 2px; letter-spacing: .3px; }
  .arn svg { margin: 0 11px 0 2px; }
  .arn span { letter-spacing: .22px; }
  .http { letter-spacing: .4px; }
  .tip { margin-top: 3px; padding-bottom: 3px; border-bottom: 1px dashed #0f141a; color: #006ce0; }
  .row + .row + .row .tip { margin-top: 6px; }
  .hbar { display: flex; padding-left: 6px; margin-top: 3px; }
  .hbar i { width: 1045px; height: 13px; border-radius: 7px; background: #8b8b8b; margin: 0 398px 0 11px; }
  .panel { flex: 1; border-top: 1px solid #c6c6cd; padding: 0 36px; }
  .grip { display: block; width: 22px; height: 3px; border-radius: 2px; background: #424650; margin: 14px auto 0; }
  .ptitle { display: flex; align-items: center; justify-content: space-between; height: 36px; margin-top: 10px; padding-right: 10px; }
  h2 { font-size: 25.500px; letter-spacing: -.34px; margin-top: -3px; }
  p { font-size: 20px; line-height: 30px; margin-top: 34px; letter-spacing: .16px; }

  footer { height: 51px; flex: none; background: #161d26; border-top: 1px solid #424650; color: #ebebf0; display: flex; align-items: center; font-size: 17px; font-weight: 500; padding: 0 24px; }
  footer > span { margin-top: -2px; }
  .cs { display: flex; align-items: center; gap: 8px; padding-top: 2px; letter-spacing: .2px; }
  .cs span { margin-top: -2px; }
  footer .fb { margin-left: 37px; }
  footer .copy { margin-left: auto; font-weight: 400; color: #c6c6cd; letter-spacing: .22px; }
  footer .f1 { margin-left: 45px; } footer .f2 { margin-left: 38px; } footer .f3 { margin-left: 37px; letter-spacing: -.05px; }

  .taskbar { height: 72px; flex: none; border-top: 2px solid rgba(190, 160, 180, .3); padding-bottom: 2px; display: flex; align-items: center; color: #fff; background: linear-gradient(90deg, #3a1340 0, #431a2d 220px, #431a2d 400px, #3a1838 560px, #301a44 680px, #221c4a 860px, #2a1a4a 1060px, #341a45 1200px, #42163a 1360px, #3f1738 1440px, #48181f 1560px, #481a22 1700px, #40163a 1860px, #3d1636 1920px) border-box; }
  .weather { width: 36px; height: 44px; margin: -8px 0 0 30px; padding-top: 8px; position: relative; }
  .badge { position: absolute; left: 17px; top: 0; width: 24px; height: 24px; border-radius: 50%; background: #ff9aa2; color: #1a1a1a; font-size: 16px; line-height: 23px; text-align: center; }
  .start { margin-left: 254px; }
  .wsearch { width: 330px; height: 48px; margin-left: 20px; border-radius: 24px; background: rgba(255, 255, 255, .14); border: 1px solid rgba(255, 255, 255, .14); display: flex; align-items: center; padding: 0 8px 0 17px; flex: none; font-size: 19px; color: #d9d0da; }
  .wsearch span { margin: 1px 0 0 14px; }
  .story { margin-left: auto; }
  .apps2 { display: flex; margin-left: 3px; }
  .app { width: 66px; height: 60px; display: flex; align-items: center; justify-content: center; position: relative; flex: none; }
  .run::after, .active::after { content: ''; position: absolute; bottom: 1px; left: 29px; width: 9px; height: 5px; border-radius: 3px; background: #a29bb0; }
  .active::before { content: ''; position: absolute; inset: 0 3px; border-radius: 7px; background: rgba(255, 255, 255, .09); border: 1px solid rgba(255, 255, 255, .07); }
  .active::after { left: 21px; width: 24px; background: #f4846a; }
  .active svg { position: relative; }
  .dell { width: 36px; height: 36px; background: #0a78d4; display: grid; place-items: center; }
  .dell span { width: 29px; height: 29px; border: 1.500px solid #fff; border-radius: 50%; font-size: 9px; font-weight: 700; line-height: 26px; display: flex; justify-content: center; letter-spacing: -.2px; }
  .zoom { width: 36px; height: 36px; border-radius: 15px; background: #0b5cff; font-size: 10px; font-weight: 600; line-height: 33px; text-align: center; }
  .xl { position: absolute; left: 16px; top: 21px; width: 18px; text-align: center; font-size: 13px; line-height: 18px; font-weight: 700; }
  .up { margin-left: 102px; }
  .sync { margin-left: 26px; }
  .cloud { margin-left: 22px; }
  .lang { width: 40px; margin-left: 24px; display: flex; flex-direction: column; align-items: center; font-size: 17px; line-height: 24px; }
  .wifi { margin-left: 25px; } .vol { margin-left: 12px; } .bat { margin-left: 12px; }
  .clock { margin: 0 30px 0 auto; display: flex; flex-direction: column; align-items: flex-end; font-size: 17px; line-height: 24px; }
  .date { letter-spacing: .35px; }
</style>
